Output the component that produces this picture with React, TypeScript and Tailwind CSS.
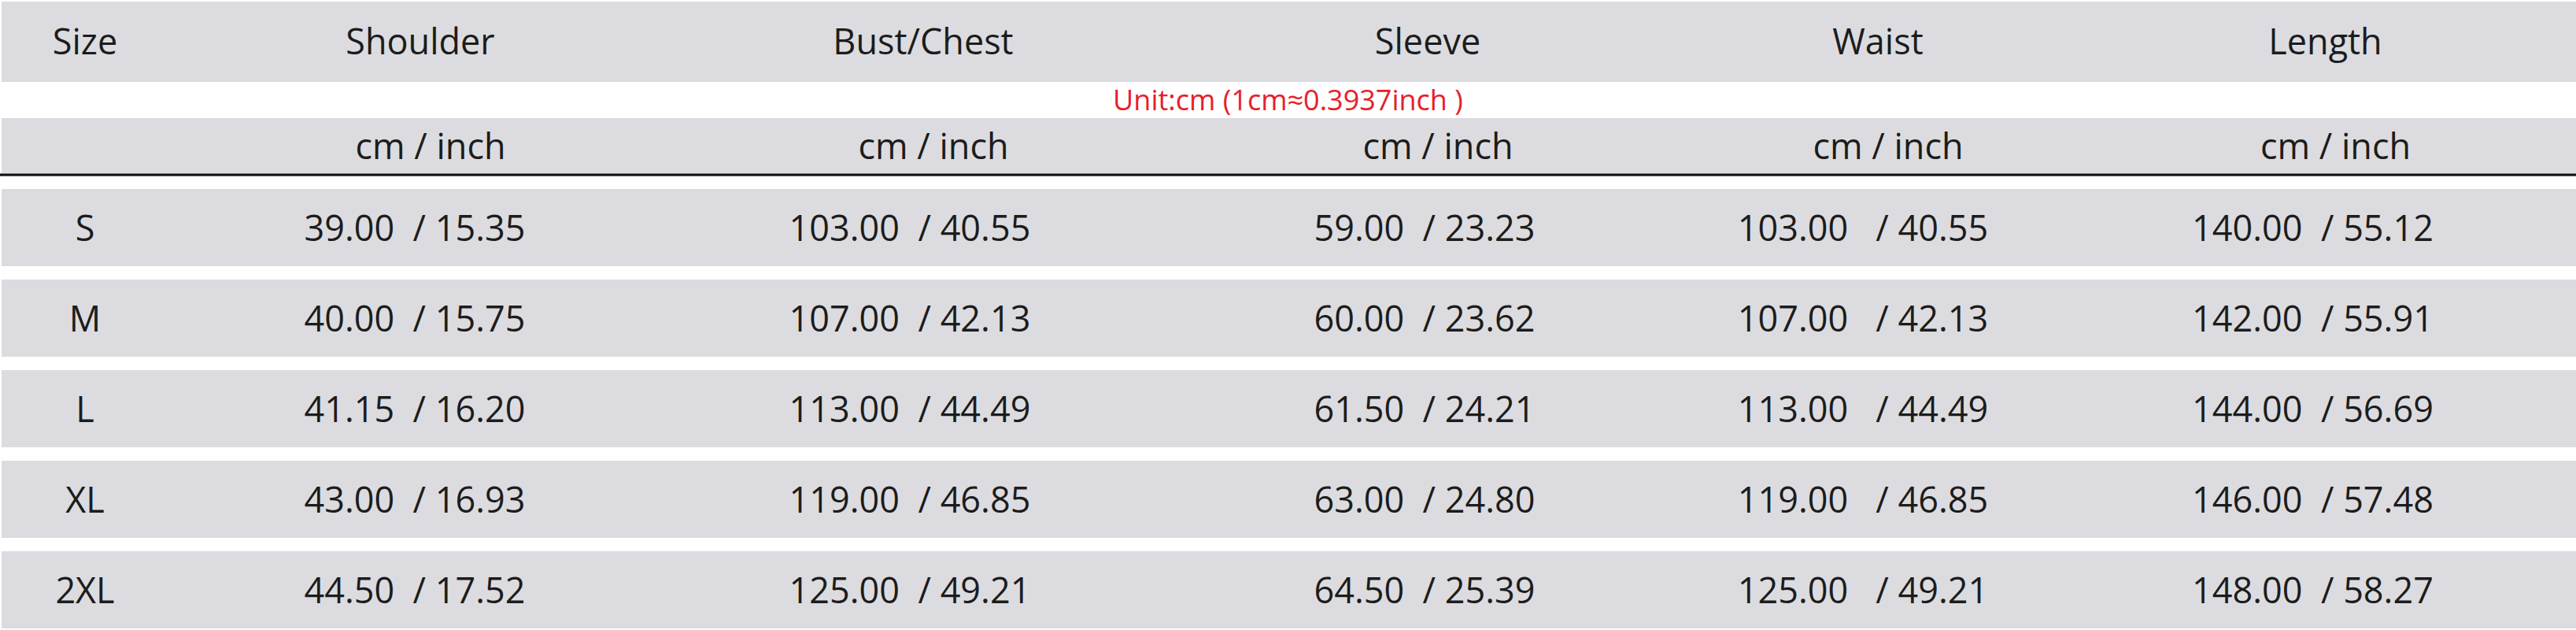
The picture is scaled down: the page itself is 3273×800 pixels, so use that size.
const cols = "grid grid-cols-[212px_640px_638px_644px_500px_1fr]";

const headers = ["Size", "Shoulder", "Bust/Chest", "Sleeve", "Waist", "Length"];

// per column nudge for the value cells
const valuePad = ["", "pr-[14px]", "pr-[34px]", "pr-[8px]", "pr-[38px]", "pr-[32px]"];

const rows = [
  ["S", "39.00  / 15.35", "103.00  / 40.55", "59.00  / 23.23", "103.00   / 40.55", "140.00  / 55.12"],
  ["M", "40.00  / 15.75", "107.00  / 42.13", "60.00  / 23.62", "107.00   / 42.13", "142.00  / 55.91"],
  ["L", "41.15  / 16.20", "113.00  / 44.49", "61.50  / 24.21", "113.00   / 44.49", "144.00  / 56.69"],
  ["XL", "43.00  / 16.93", "119.00  / 46.85", "63.00  / 24.80", "119.00   / 46.85", "146.00  / 57.48"],
  ["2XL", "44.50  / 17.52", "125.00  / 49.21", "64.50  / 25.39", "125.00   / 49.21", "148.00  / 58.27"],
];

const App = () => {
  return (
    <div className="w-[3273px] h-[800px] bg-white overflow-hidden pt-[2px] pl-[2px] font-['Open_Sans',sans-serif] text-[#1c1c1c]">
      {/* header */}
      <div className={`${cols} h-[102px] bg-[#dcdce0] items-center text-[45px]`}>
        {headers.map((h) => (
          <div key={h} className="text-center pb-[2px]">
            {h}
          </div>
        ))}
      </div>

      {/* unit note */}
      <div className="h-[46px] flex items-center justify-center text-[36px] text-[#e62129] pr-[2px]">
        Unit:cm (1cm≈0.3937inch )
      </div>

      {/* cm / inch */}
      <div className={`${cols} h-[70px] bg-[#dcdce0] items-center text-[45px]`}>
        <div />
        {[1, 2, 3, 4, 5].map((i) => (
          <div key={i} className="text-center pl-[26px]">
            cm / inch
          </div>
        ))}
      </div>
      <div className="h-[4px] bg-[#111] border-y border-[#707070] -ml-[2px]" />

      {/* values */}
      <div className="flex flex-col gap-[17px] mt-[16px]">
        {rows.map((r) => (
          <div key={r[0]} className={`${cols} h-[98px] bg-[#dcdce0] items-center text-[45px]`}>
            {r.map((v, i) => (
              <div key={i} className={`text-center whitespace-pre ${valuePad[i]}`}>
                {v}
              </div>
            ))}
          </div>
        ))}
      </div>
    </div>
  );
};

export default App;
